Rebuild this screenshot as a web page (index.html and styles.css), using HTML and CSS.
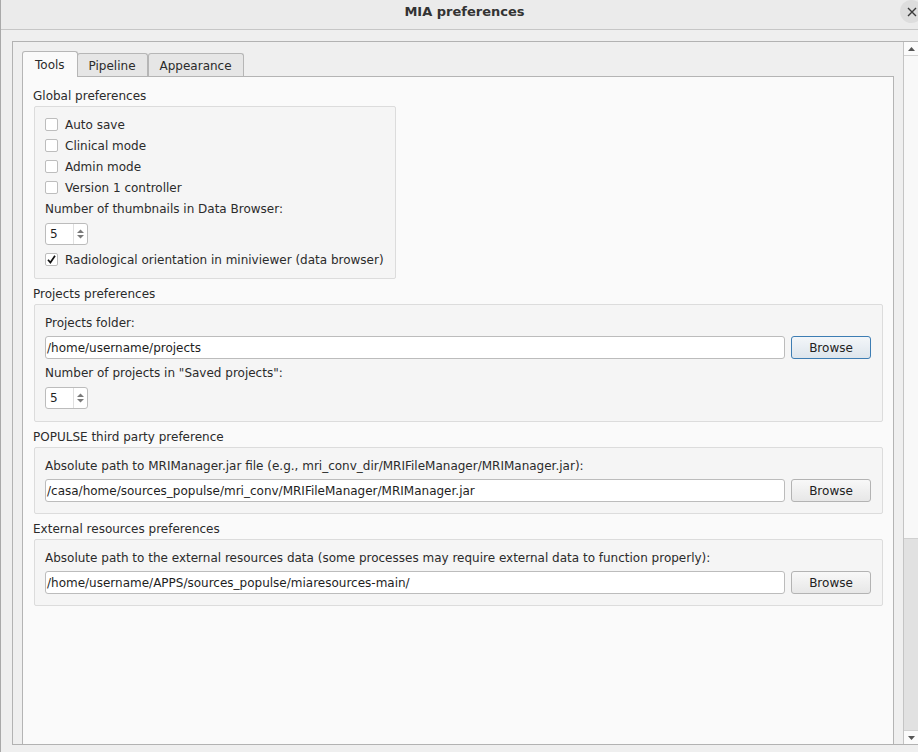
FILE: index.html
```html
<!DOCTYPE html>
<html lang="en">
<head>
<meta charset="utf-8">
<title>MIA preferences</title>
<link rel="stylesheet" href="styles.css">
</head>
<body>
<header class="titlebar">
  <span class="title">MIA preferences</span>
  <button class="close" aria-label="Close">
    <svg width="10" height="10" viewBox="0 0 10 10"><path d="M1 1 L9 9 M9 1 L1 9" stroke="#3a3a3a" stroke-width="1.4" fill="none"/></svg>
  </button>
</header>
<main class="main">
  <div class="frame">
    <div class="viewport">
      <div class="tabbar">
        <div class="tab active">Tools</div>
        <div class="tab">Pipeline</div>
        <div class="tab">Appearance</div>
      </div>
      <div class="pane">
        <div class="section-label">Global preferences</div>
        <div class="group group-fit">
          <div class="row"><span class="check"></span>Auto save</div>
          <div class="row"><span class="check"></span>Clinical mode</div>
          <div class="row"><span class="check"></span>Admin mode</div>
          <div class="row"><span class="check"></span>Version 1 controller</div>
          <div class="row">Number of thumbnails in Data Browser:</div>
          <div class="spin spin-gap"><span class="spin-val">5</span><span class="spin-btns"><svg width="9" height="12" viewBox="0 0 9 12"><path d="M4.5 1.5 L8 5 L1 5 Z" fill="#7a7a7a"/><path d="M1 7 L8 7 L4.5 10.5 Z" fill="#7a7a7a"/></svg></span></div>
          <div class="row row-gap"><span class="check checked"><svg width="11" height="11" viewBox="0 0 11 11"><path d="M2 5.8 L4.4 8.6 L9 1.8" stroke="#111" stroke-width="1.7" fill="none"/></svg></span>Radiological orientation in miniviewer (data browser)</div>
        </div>

        <div class="section-label">Projects preferences</div>
        <div class="group group-projects">
          <div class="row">Projects folder:</div>
          <div class="field-row">
            <div class="input">/home/username/projects</div>
            <button class="btn focused">Browse</button>
          </div>
          <div class="row row-gap3">Number of projects in "Saved projects":</div>
          <div class="spin spin-gap"><span class="spin-val">5</span><span class="spin-btns"><svg width="9" height="12" viewBox="0 0 9 12"><path d="M4.5 1.5 L8 5 L1 5 Z" fill="#7a7a7a"/><path d="M1 7 L8 7 L4.5 10.5 Z" fill="#7a7a7a"/></svg></span></div>
        </div>

        <div class="section-label">POPULSE third party preference</div>
        <div class="group">
          <div class="row">Absolute path to MRIManager.jar file (e.g., mri_conv_dir/MRIFileManager/MRIManager.jar):</div>
          <div class="field-row">
            <div class="input">/casa/home/sources_populse/mri_conv/MRIFileManager/MRIManager.jar</div>
            <button class="btn">Browse</button>
          </div>
        </div>

        <div class="section-label">External resources preferences</div>
        <div class="group">
          <div class="row">Absolute path to the external resources data (some processes may require external data to function properly):</div>
          <div class="field-row">
            <div class="input">/home/username/APPS/sources_populse/miaresources-main/</div>
            <button class="btn">Browse</button>
          </div>
        </div>
      </div>
    </div>
    <div class="scrollbar">
      <div class="sb-arrow sb-up"><svg width="7" height="4" viewBox="0 0 7 4"><path d="M3.5 0 L7 4 L0 4 Z" fill="#555"/></svg></div>
      <div class="sb-track"></div>
      <div class="sb-handle"></div>
      <div class="sb-arrow sb-down"><svg width="7" height="4" viewBox="0 0 7 4"><path d="M0 0 L7 0 L3.5 4 Z" fill="#555"/></svg></div>
    </div>
  </div>
</main>
</body>
</html>
```

FILE: styles.css
```css
* { box-sizing: border-box; }

html, body { margin: 0; padding: 0; }

body {
  width: 918px;
  height: 752px;
  overflow: hidden;
  position: relative;
  background: #efefef;
  border-left: 1px solid #a9a9a9;
  font-family: "DejaVu Sans", "Liberation Sans", sans-serif;
  font-size: 12px;
  color: #2b2b2b;
}

.titlebar {
  height: 30px;
  background: #ebebeb;
  border-bottom: 1px solid #c6c6c6;
  display: flex;
  justify-content: center;
  align-items: flex-start;
  padding-top: 4px;
  padding-left: 10px;
}

.title {
  font-weight: bold;
  font-size: 13px;
  line-height: 16px;
  color: #333333;
}

.close {
  position: absolute;
  left: 899px;
  top: 0;
  width: 23px;
  height: 23px;
  border: none;
  padding: 0;
  border-radius: 50%;
  background: #dddddd;
  display: flex;
  align-items: center;
  justify-content: center;
}

.main {
  padding: 11px 0 0 11px;
}

.frame {
  width: 907px;
  height: 704px;
  border: 1px solid #b2b2b2;
  display: flex;
}

.viewport {
  width: 890px;
  height: 702px;
  overflow: hidden;
  padding: 9px 9px 0 9px;
}

.tabbar {
  display: flex;
  align-items: flex-end;
  height: 25px;
  position: relative;
  z-index: 2;
}

.tab {
  height: 23px;
  padding: 1px 11px 0 11px;
  border: 1px solid #b6b6b6;
  border-bottom: none;
  border-radius: 3px 3px 0 0;
  background: #e6e6e6;
  display: flex;
  align-items: center;
  margin-left: -1px;
  color: #2b2b2b;
}

.tab + .tab + .tab { margin-left: 0; }

.tab.active {
  margin-left: 0;
  height: 26px;
  padding: 0 12px;
  margin-bottom: -1px;
  background: #fafafa;
  position: relative;
  z-index: 3;
}

.pane {
  width: 872px;
  height: 700px;
  border: 1px solid #b4b4b4;
  background: #fafafa;
  padding: 11px 10px 0 11px;
  display: flex;
  flex-direction: column;
  align-items: stretch;
}

.section-label {
  line-height: 14px;
  height: 15px;
  padding-top: 1px;
  margin-left: -1px;
  margin-bottom: 3px;
}

.group {
  border: 1px solid #dcdcdc;
  border-radius: 2px;
  background: #f5f5f5;
  padding: 7px 11px 11px 10px;
  margin-bottom: 7px;
  display: flex;
  flex-direction: column;
}

.group-fit {
  align-self: flex-start;
  padding: 7px 11px 8px 10px;
}

.group-projects {
  padding-bottom: 12px;
}

.row {
  height: 21px;
  display: flex;
  align-items: center;
  white-space: nowrap;
}

.row-gap { margin-top: 4px; }
.row-gap3 { margin-top: 3px; }

.check {
  width: 13px;
  height: 13px;
  border: 1px solid #bdbdbd;
  border-radius: 2px;
  background: #ffffff;
  margin-right: 7px;
  display: flex;
  align-items: center;
  justify-content: center;
  flex: none;
}

.spin {
  width: 43px;
  height: 22px;
  border: 1px solid #bcbcbc;
  border-radius: 3px;
  background: #ffffff;
  display: flex;
  align-items: stretch;
  color: #1e1e1e;
}

.spin-gap { margin-top: 4px; }

.spin-val {
  width: 27px;
  padding-left: 4px;
  display: flex;
  align-items: center;
}

.spin-btns {
  flex: 1;
  border-left: 1px solid #e0e0e0;
  display: flex;
  align-items: center;
  justify-content: center;
}

.field-row {
  display: flex;
  gap: 6px;
  margin-top: 3px;
}

.input {
  flex: 1;
  height: 23px;
  border: 1px solid #bcbcbc;
  border-radius: 3px;
  background: #ffffff;
  padding-left: 1px;
  display: flex;
  align-items: center;
  color: #1e1e1e;
  white-space: nowrap;
  overflow: hidden;
}

.btn {
  width: 80px;
  height: 23px;
  border: 1px solid #b3b3b3;
  border-radius: 3px;
  background: linear-gradient(#f8f8f8, #e7e7e7);
  font-family: "DejaVu Sans", "Liberation Sans", sans-serif;
  font-size: 12px;
  color: #222222;
  padding: 0;
}

.btn.focused {
  border-color: #3d7db3;
  background: linear-gradient(#f3f6f9, #dde5ec);
}

.scrollbar {
  width: 15px;
  height: 702px;
  border-left: 1px solid #c4c4c4;
  background: #f8f8f8;
  display: flex;
  flex-direction: column;
}

.sb-arrow {
  height: 14px;
  display: flex;
  align-items: center;
  justify-content: center;
  background: #fbfbfb;
}

.sb-up { border-bottom: 1px solid #d2d2d2; }
.sb-down { border-top: 1px solid #d2d2d2; }

.sb-track {
  height: 482px;
  background: #f8f8f8;
}

.sb-handle {
  height: 192px;
  background: #e1e1e1;
  border-top: 1px solid #d0d0d0;
}
```
